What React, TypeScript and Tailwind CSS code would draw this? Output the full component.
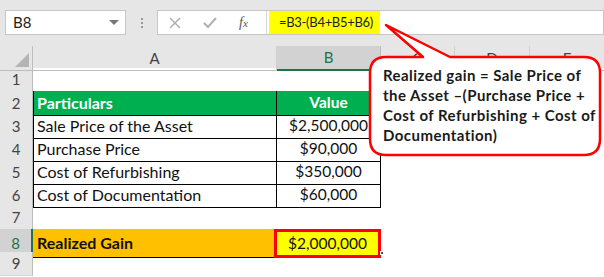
import React from "react";

const cols = "grid grid-cols-[33px_244px_104px_74px_75px_74px]";
const font = "font-['Lato','Liberation_Sans',sans-serif]";

type RowProps = {
  n: number;
  a?: React.ReactNode;
  b?: React.ReactNode;
  aClass?: string;
  bClass?: string;
  selected?: boolean;
};

function Row({ n, a, b, aClass = "", bClass = "", selected }: RowProps) {
  return (
    <div className={`${cols} h-[23px]`}>
      <div
        className={
          selected
            ? "flex items-center justify-center bg-[#d2d2d2] text-[#217346] border-r-2 border-r-[#217346] border-b border-b-[#c8c8c8] text-[15px]"
            : "flex items-center justify-center bg-[#e6e6e6] text-[#444] border-r border-r-[#bdbdbd] border-b border-b-[#d6d6d6] text-[15px]"
        }
      >
        {n}
      </div>
      <div className={`flex items-center pl-[4px] text-[16px] text-[#111] whitespace-nowrap ${aClass}`}>{a}</div>
      <div className={`flex items-center justify-center text-[15.5px] text-[#111] ${bClass}`}>{b}</div>
      <div />
      <div />
      <div />
    </div>
  );
}

export default function App() {
  const data = [
    { n: 3, a: "Sale Price of the Asset", b: "$2,500,000" },
    { n: 4, a: "Purchase Price", b: "$90,000" },
    { n: 5, a: "Cost of Refurbishing", b: "$350,000" },
    { n: 6, a: "Cost of Documentation", b: "$60,000" },
  ];

  return (
    <div className={`relative w-[604px] h-[277px] overflow-hidden bg-white ${font}`}>
      {/* Formula bar */}
      <div className="h-[46px] bg-[#e6e6e6] flex items-start pt-[10px] pl-[5px]">
        <div className="w-[121px] h-[25px] bg-white border border-[#c6c6c6] flex items-center justify-between pl-[7px] pr-[6px] text-[15px] text-[#222]">
          <span>B8</span>
          <span className="w-0 h-0 border-l-[5px] border-r-[5px] border-t-[5px] border-l-transparent border-r-transparent border-t-[#777]" />
        </div>
        <div className="w-[31px] h-[25px] flex flex-col items-center justify-center gap-[2px]">
          <span className="w-[2px] h-[2px] bg-[#999]" />
          <span className="w-[2px] h-[2px] bg-[#999]" />
          <span className="w-[2px] h-[2px] bg-[#999]" />
        </div>
        <div className="flex-1 h-[25px] bg-white border border-[#c6c6c6] flex items-stretch">
          <div className="w-[109px] flex items-center pl-[11px] gap-[22px] border-r border-[#d6d6d6]">
            <svg width="12" height="12" viewBox="0 0 12 12">
              <path d="M1 1L11 11M11 1L1 11" stroke="#b0b0b0" strokeWidth="1.5" />
            </svg>
            <svg width="14" height="12" viewBox="0 0 14 12">
              <path d="M1 6L5 10L13 1" stroke="#b0b0b0" strokeWidth="2" fill="none" />
            </svg>
            <span className="font-['Liberation_Serif',serif] italic text-[14px] text-[#555]">
              f<span className="text-[11px]">x</span>
            </span>
          </div>
          <div className="w-[111px] bg-[#ffff00] flex items-center pl-[10px] text-[13px] tracking-[-0.3px] text-[#222] ml-[2px] whitespace-nowrap">
            =B3-(B4+B5+B6)
          </div>
          <div className="flex-1" />
        </div>
      </div>

      {/* Column headers */}
      <div className={`${cols} h-[22px] bg-[#e6e6e6] text-[15px] text-[#444]`}>
        <div className="relative border-r border-[#bdbdbd] border-b border-b-[#bdbdbd]">
          <svg className="absolute right-[3px] bottom-[3px]" width="14" height="14" viewBox="0 0 14 14">
            <path d="M14 0L14 14L0 14Z" fill="#b4b4b4" />
          </svg>
        </div>
        <div className="flex items-center justify-center border-r border-[#d0d0d0] border-b border-b-[#bdbdbd]">A</div>
        <div className="flex items-center justify-center bg-[#d2d2d2] text-[#217346] border-r border-[#bdbdbd] border-b-2 border-b-[#217346]">B</div>
        <div className="flex items-center justify-center border-r border-[#d0d0d0] border-b border-b-[#bdbdbd]">C</div>
        <div className="flex items-center justify-center border-r border-[#d0d0d0] border-b border-b-[#bdbdbd]">D</div>
        <div className="flex items-center justify-center border-b border-b-[#bdbdbd]">E</div>
      </div>

      {/* Sheet rows */}
      <Row n={1} aClass="border-b border-black" bClass="border-b border-black" />
      <Row
        n={2}
        a="Particulars"
        b="Value"
        aClass="bg-[#00b050] !text-white font-bold border-r border-b border-black shadow-[inset_1px_0_0_#000]"
        bClass="bg-[#00b050] !text-white font-bold border-r border-b border-black"
      />
      {data.map((r) => (
        <Row
          key={r.n}
          n={r.n}
          a={r.a}
          b={r.b}
          aClass="border-r border-b border-black shadow-[inset_1px_0_0_#000]"
          bClass="border-r border-b border-black"
        />
      ))}
      <Row n={7} />
      <Row
        n={8}
        selected
        a="Realized Gain"
        b="$2,000,000"
        aClass="bg-[#ffc000] font-bold border-b border-black"
        bClass="bg-[#ffff00] border-[3px] border-[#ff0000] -ml-[3px]"
      />
      <Row n={9} />

      {/* fill handle */}
      <span className="absolute left-[380px] top-[251px] w-[4px] h-[4px] bg-[#217346] border border-white" />

      {/* Callout */}
      <svg className="absolute left-0 top-0 pointer-events-none" width="604" height="277">
        <path
          d="M423 57 L386 25 L450 57 L584 57 Q600 57 600 73 L600 139 Q600 155 584 155 L386 155 Q370 155 370 139 L370 73 Q370 57 386 57 Z"
          fill="white"
          stroke="#ff0000"
          strokeWidth="2.5"
          strokeLinejoin="round"
        />
      </svg>
      <div className="absolute left-[383px] top-[65px] text-[15px] leading-[20px] tracking-[0.45px] font-bold text-[#1a1a1a] whitespace-nowrap">
        Realized gain = Sale Price of
        <br />
        the Asset –(Purchase Price +
        <br />
        Cost of Refurbishing + Cost of
        <br />
        Documentation)
      </div>
    </div>
  );
}
